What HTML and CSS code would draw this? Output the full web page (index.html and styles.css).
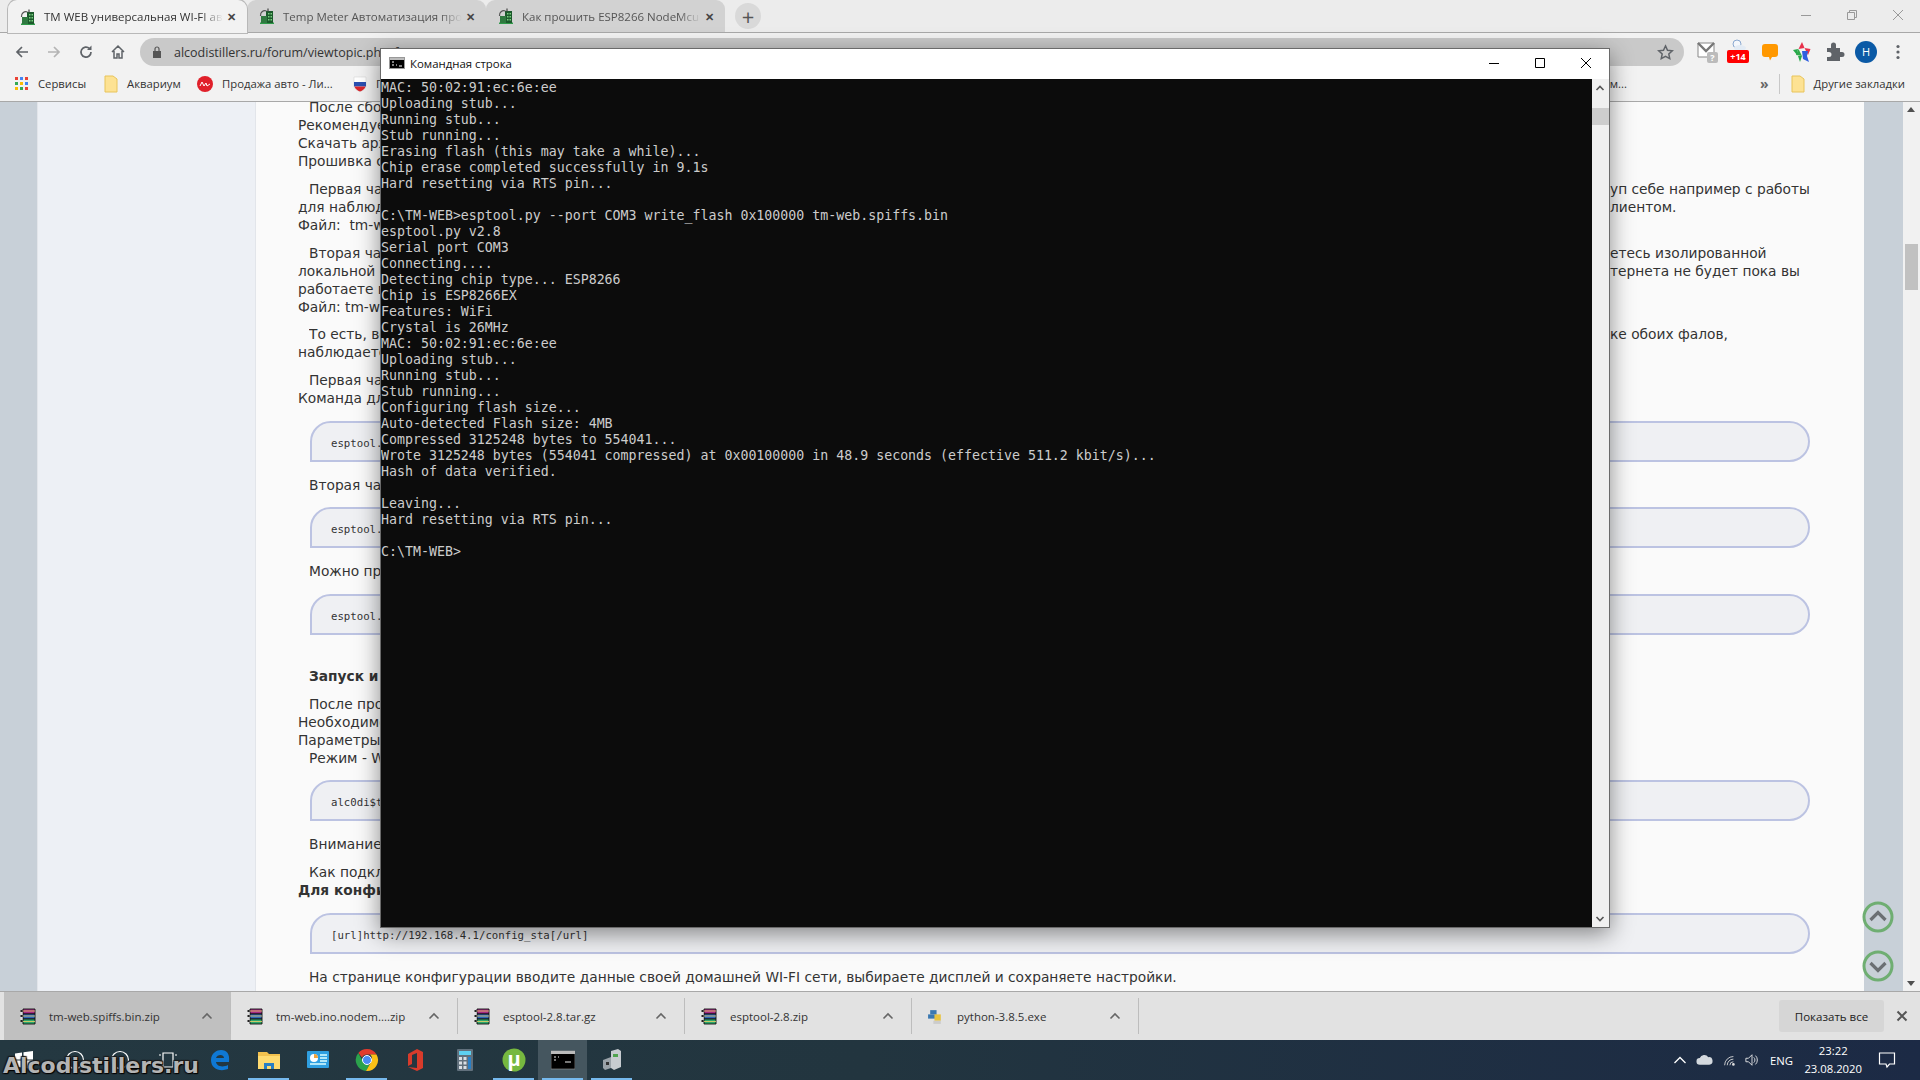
FILE: index.html
```html
<!DOCTYPE html>
<html lang="ru">
<head>
<meta charset="utf-8">
<title>Командная строка</title>
<link rel="stylesheet" href="styles.css">
</head>
<body>
<svg width="0" height="0" class="defs">
  <defs>
    <symbol id="fav" viewBox="0 0 16 16"><path d="M1 14.500h14V16H1z" fill="#2f9a4a"/><path d="M7 3h7v12H7z" fill="#1c5a2c"/><path d="M2 8h6v7H2z" fill="#2f7a40"/><path d="M9 5h1.500v1.500H9zM11.500 5H13v1.500h-1.500zM9 8h1.500v1.500H9zM11.500 8H13v1.500h-1.500zM9 11h1.500v1.500H9zM11.500 11H13v1.500h-1.500z" fill="#79d07f"/><path d="M1.500 8a4.500 4.500 0 0 1 6-5" fill="none" stroke="#555" stroke-width="1.300"/><path d="M9 0.500v3" stroke="#444" stroke-width="1.200"/></symbol>
    <symbol id="rar" viewBox="0 0 17 17"><path d="M4 1h12v5H4z" fill="#a32a86" stroke="#111" stroke-width=".9"/><path d="M4 6h12v5H4z" fill="#2f68b8" stroke="#111" stroke-width=".9"/><path d="M4 11h12v5H4z" fill="#2fa66c" stroke="#111" stroke-width=".9"/><path d="M4 3h12M4 8h12M4 13.500h12" stroke="#f0d36a" stroke-width=".8"/><path d="M1.500 2h2v2h-2zM1.500 7h2v2h-2zM1.500 12h2v2h-2z" fill="#222"/><path d="M1.500 4h2v3h-2zM1.500 9h2v3h-2z" fill="#ddd"/></symbol>
    <symbol id="chev" viewBox="0 0 12 8"><path d="M1.500 6.500L6 2l4.500 4.500" fill="none" stroke="#666" stroke-width="1.600"/></symbol>
    <symbol id="folder" viewBox="0 0 14 18"><path d="M1 1h8l4 3v13H1z" fill="#fde293" stroke="#e8c45a"/></symbol>
  </defs>
</svg>

<div class="screen">
  <header class="tabstrip">
    <div class="tab tab-active">
      <svg class="favicon"><use href="#fav"/></svg>
      <span class="tab-title">TM WEB универсальная WI-FI ав</span>
      <span class="tab-x">✕</span>
    </div>
    <div class="tab">
      <svg class="favicon"><use href="#fav"/></svg>
      <span class="tab-title">Temp Meter Автоматизация про</span>
      <span class="tab-x">✕</span>
    </div>
    <div class="tab">
      <svg class="favicon"><use href="#fav"/></svg>
      <span class="tab-title">Как прошить ESP8266 NodeMcu</span>
      <span class="tab-x">✕</span>
    </div>
    <div class="newtab">+</div>
    <div class="winctl">
      <svg width="12" height="12" viewBox="0 0 12 12"><path d="M1 6.500h10" stroke="#999"/></svg>
      <svg width="12" height="12" viewBox="0 0 12 12"><path d="M1.500 3.500h7v7h-7zM3.500 3.500v-2h7v7h-2" fill="none" stroke="#999"/></svg>
      <svg width="12" height="12" viewBox="0 0 12 12"><path d="M1 1l10 10M11 1L1 11" stroke="#999"/></svg>
    </div>
  </header>

  <div class="toolbar">
    <svg class="tb-ic" viewBox="0 0 16 16"><path d="M14 8H3M8 3L3 8l5 5" fill="none" stroke="#5f6368" stroke-width="1.700"/></svg>
    <svg class="tb-ic" viewBox="0 0 16 16"><path d="M2 8h11M8 3l5 5-5 5" fill="none" stroke="#b4b4b4" stroke-width="1.700"/></svg>
    <svg class="tb-ic" viewBox="0 0 16 16"><path d="M13 8a5 5 0 1 1-1.500-3.500" fill="none" stroke="#5f6368" stroke-width="1.700"/><path d="M13.500 1.500v4.500H9z" fill="#5f6368"/></svg>
    <svg class="tb-ic" viewBox="0 0 16 16"><path d="M2 8l6-6 6 6M4 7v7h3v-4h2v4h3V7" fill="none" stroke="#5f6368" stroke-width="1.500"/></svg>
    <div class="omnibox">
      <svg class="lock" viewBox="0 0 10 12"><path d="M1 5h8v7H1z" fill="#555"/><path d="M3 5V3a2 2 0 0 1 4 0v2" fill="none" stroke="#555" stroke-width="1.200"/></svg>
      <span class="url">alcodistillers.ru/forum/viewtopic.php?f=1&amp;t=1707</span>
      <svg class="star" viewBox="0 0 16 16"><path d="M8 1.800l1.900 4.100 4.500.5-3.300 3 .9 4.400L8 11.600l-4 2.200.9-4.400-3.300-3 4.500-.5z" fill="none" stroke="#5f6368" stroke-width="1.400"/></svg>
    </div>
    <div class="exts">
      <svg class="ext ext-mail" viewBox="0 0 22 22"><path d="M1 2h16v14H1z" fill="#fff" stroke="#888"/><path d="M1 2l8 8 8-8" fill="none" stroke="#777" stroke-width="2.400"/><rect x="10" y="11" width="11" height="11" rx="2" fill="#bbb"/><text x="15.500" y="20" class="ext-q">?</text></svg>
      <div class="ext weather"><svg width="20" height="12" viewBox="0 0 20 12"><circle cx="9" cy="5" r="4" fill="#f4f7fb" stroke="#8aa8d0"/><ellipse cx="12" cy="9" rx="6" ry="3" fill="#e3ebf4"/></svg><span class="badge">+14</span></div>
      <svg class="ext" viewBox="0 0 22 22"><path d="M6 3h10a3 3 0 0 1 3 3v7a3 3 0 0 1-3 3h-3l-2 3.500-1-3.500H6a3 3 0 0 1-3-3V6a3 3 0 0 1 3-3z" fill="#ff9800"/></svg>
      <svg class="ext" viewBox="0 0 22 22"><path d="M11 1l2.500 6-6 1z" fill="#e8304a"/><path d="M13.500 7l6 1-2.500 6z" fill="#e8304a"/><path d="M7.500 8L5 14l6 1z" fill="#2faa4a"/><path d="M2 9l5-1-1 6zM7 15l4 0-2 6z" fill="#26a84a"/><path d="M11 10l6 0-1 5 2 6-6-3z" fill="#2f5fe0"/></svg>
      <svg class="ext" viewBox="0 0 22 22"><path d="M4 7h4V4a2.500 2.500 0 0 1 5 0v3h4v4h2a2.500 2.500 0 0 1 0 5h-2v4H4v-4h2a2.500 2.500 0 0 0 0-5H4z" fill="#5f6368"/></svg>
      <div class="avatar">H</div>
      <svg class="menu" viewBox="0 0 4 16"><circle cx="2" cy="2.500" r="1.600" fill="#5f6368"/><circle cx="2" cy="8" r="1.600" fill="#5f6368"/><circle cx="2" cy="13.500" r="1.600" fill="#5f6368"/></svg>
    </div>
  </div>

  <nav class="bookmarks">
    <div class="bm bm-apps">
      <svg class="apps" viewBox="0 0 14 14">
        <rect x="0" y="0" width="3" height="3" fill="#ea4335"/><rect x="5" y="0" width="3" height="3" fill="#4285f4"/><rect x="10" y="0" width="3" height="3" fill="#ea4335"/>
        <rect x="0" y="5" width="3" height="3" fill="#34a853"/><rect x="5" y="5" width="3" height="3" fill="#fbbc05"/><rect x="10" y="5" width="3" height="3" fill="#4285f4"/>
        <rect x="0" y="10" width="3" height="3" fill="#fbbc05"/><rect x="5" y="10" width="3" height="3" fill="#34a853"/><rect x="10" y="10" width="3" height="3" fill="#ea4335"/>
      </svg>
      <span>Сервисы</span>
    </div>
    <div class="bm bm-aqua"><svg class="bm-folder"><use href="#folder"/></svg><span>Аквариум</span></div>
    <div class="bm bm-auto"><svg class="bm-ic" viewBox="0 0 16 16"><circle cx="8" cy="8" r="8" fill="#e0202a"/><path d="M3 10l2-4 2 4 2-3 1 3 3-2" fill="none" stroke="#fff" stroke-width="1"/></svg><span>Продажа авто - Ли...</span></div>
    <div class="bm bm-ru"><svg class="bm-ic" viewBox="0 0 16 16"><path d="M2 1h12v9c0 3-3 4.500-6 5.500C5 14.500 2 13 2 10z" fill="#fff" stroke="#ccc" stroke-width=".5"/><path d="M2 6h12v4.500H2z" fill="#2a4fb0"/><path d="M2.500 10.500h11C13 13 10.500 14.500 8 15.500 5.500 14.500 3 13 2.500 10.500z" fill="#d8262c"/></svg><span>Продажа</span></div>
    <div class="bm-right">
      <span class="bm-cut">м...</span>
      <span class="bm-more">»</span>
      <span class="bm-sep"></span>
      <svg class="bm-folder"><use href="#folder"/></svg>
      <span class="bm-other">Другие закладки</span>
    </div>
  </nav>

  <main class="viewport">
    <div class="page-gutter"></div>
    <div class="page-side"></div>
    <article class="post">
      <p class="para">
        <span class="ln ind">После сборки прошивки</span>
        <span class="ln">Рекомендуем использовать</span>
        <span class="ln">Скачать архив</span>
        <span class="ln">Прошивка состоит</span>
      </p>
      <p class="para">
        <span class="ln ind split"><span class="ln-l">Первая часть прошивки</span><span class="ln-r">уп себе например с работы</span></span>
        <span class="ln split"><span class="ln-l">для наблюдения</span><span class="ln-r">лиентом.</span></span>
        <span class="ln">Файл:&nbsp; tm-web.ino.nodemcu</span>
      </p>
      <p class="para para-short">
        <span class="ln ind split"><span class="ln-l">Вторая часть прошивки</span><span class="ln-r">етесь изолированной</span></span>
        <span class="ln split"><span class="ln-l">локальной сети</span><span class="ln-r">тернета не будет пока вы</span></span>
        <span class="ln">работаете в</span>
        <span class="ln">Файл: tm-web.spiffs</span>
      </p>
      <p class="para">
        <span class="ln ind split"><span class="ln-l">То есть, все</span><span class="ln-r">ке обоих фалов,</span></span>
        <span class="ln">наблюдаете</span>
      </p>
      <p class="para">
        <span class="ln ind">Первая часть</span>
        <span class="ln">Команда для</span>
      </p>
      <div class="code">esptool.py</div>
      <p class="para tight tight-a"><span class="ln ind">Вторая часть</span></p>
      <div class="code">esptool.py</div>
      <p class="para tight"><span class="ln ind">Можно прошить</span></p>
      <div class="code">esptool.py</div>
      <p class="para head"><span class="ln ind"><b>Запуск и настройка</b></span></p>
      <p class="para para-before-code">
        <span class="ln ind">После прошивки</span>
        <span class="ln">Необходимо</span>
        <span class="ln">Параметры</span>
        <span class="ln ind">Режим - WI-FI</span>
      </p>
      <div class="code">alc0di$tillers</div>
      <p class="para tight tight-b"><span class="ln ind">Внимание</span></p>
      <p class="para">
        <span class="ln ind">Как подключиться</span>
        <span class="ln"><b>Для конфигурации</b></span>
      </p>
      <div class="code">[url]http://192.168.4.1/config_sta[/url]</div>
      <p class="para tight"><span class="ln ind">На странице конфигурации вводите данные своей домашней WI-FI сети, выбираете дисплей и сохраняете настройки.</span></p>
    </article>
    <div class="page-right">
      <svg class="jump jump-up" viewBox="0 0 32 32"><circle cx="16" cy="16" r="14" fill="none" stroke="#6fae72" stroke-width="3"/><path d="M8.500 19L16 11.500 23.500 19" fill="none" stroke="#6b6f73" stroke-width="3.200"/></svg>
      <svg class="jump jump-down" viewBox="0 0 32 32"><circle cx="16" cy="16" r="14" fill="none" stroke="#6fae72" stroke-width="3"/><path d="M8.500 13L16 20.500 23.500 13" fill="none" stroke="#6b6f73" stroke-width="3.200"/></svg>
    </div>
    <div class="pg-scroll">
      <span class="sb-up"></span>
      <span class="sb-thumb"></span>
      <span class="sb-down"></span>
    </div>
  </main>

  <div class="downloads">
    <div class="dl dl-hover"><svg class="dl-ic"><use href="#rar"/></svg><span class="dl-name">tm-web.spiffs.bin.zip</span><svg class="dl-ch"><use href="#chev"/></svg></div>
    <div class="dl"><svg class="dl-ic"><use href="#rar"/></svg><span class="dl-name">tm-web.ino.nodem....zip</span><svg class="dl-ch"><use href="#chev"/></svg></div>
    <div class="dl"><svg class="dl-ic"><use href="#rar"/></svg><span class="dl-name">esptool-2.8.tar.gz</span><svg class="dl-ch"><use href="#chev"/></svg></div>
    <div class="dl"><svg class="dl-ic"><use href="#rar"/></svg><span class="dl-name">esptool-2.8.zip</span><svg class="dl-ch"><use href="#chev"/></svg></div>
    <div class="dl"><svg class="dl-ic" viewBox="0 0 16 16"><path d="M3 2h6v4H3z" fill="#3b78b0"/><path d="M1 6h8v4H1z" fill="#3b78b0"/><path d="M7 6h6v6H7z" fill="#e8c340"/><path d="M6 12h7v3H6z" fill="#ccc"/></svg><span class="dl-name">python-3.8.5.exe</span><svg class="dl-ch"><use href="#chev"/></svg></div>
    <div class="dl-end">
      <div class="showall">Показать все</div>
      <svg class="dl-close" viewBox="0 0 12 12"><path d="M1.500 1.500l9 9M10.500 1.500l-9 9" stroke="#555" stroke-width="2"/></svg>
    </div>
  </div>

  <footer class="taskbar">
    <div class="tb-left">
      <svg class="tk" viewBox="0 0 20 20"><path d="M1 3.500l7-1v7H1zM9.500 2.300L19 1v8.500H9.500zM1 10.500h7v7l-7-1zM9.500 10.500H19V19l-9.500-1.300z" fill="#fff"/></svg>
      <svg class="tk tk-search" viewBox="0 0 20 20"><circle cx="10" cy="10" r="8.500" fill="none" stroke="#fff" stroke-width="1.200"/></svg>
      <svg class="tk tk-cortana" viewBox="0 0 20 20"><circle cx="10" cy="10" r="8.500" fill="none" stroke="#fff" stroke-width="1.200"/></svg>
      <svg class="tk tk-view" viewBox="0 0 20 20"><path d="M5 3h10v14H5zM1 5h2M17 5h2M1 15h2M17 15h2" fill="none" stroke="#fff" stroke-width="1.200"/></svg>
    </div>
    <div class="tb-apps">
      <div class="app"><svg viewBox="0 0 24 24"><path d="M21 14H8c.5 4 6 6 12 3v4c-8 3-17 0-17-9C3 5 9 2 13 2c6 0 9 4 8 12zM8 10h8c0-4-7-4-8 0z" fill="#0f78d4"/></svg></div>
      <div class="app on"><svg viewBox="0 0 24 24"><path d="M1 4h9l2 2h11v4H1z" fill="#f2c14e"/><path d="M1 8h22v13H1z" fill="#ffdb70"/><path d="M7 15h10v6H7z" fill="#2a7fc4"/><path d="M10 18h4v3h-4z" fill="#ffdb70"/></svg></div>
      <div class="app"><svg viewBox="0 0 24 24"><rect x="1" y="3" width="22" height="17" rx="1" fill="#2f9fe0"/><circle cx="8" cy="10" r="4" fill="#fff"/><path d="M8 10V6a4 4 0 0 1 4 4z" fill="#f2a33a"/><path d="M14 7h7M14 10h7M14 13h7M4 16h16" stroke="#dff" stroke-width="1.500"/></svg></div>
      <div class="app on"><svg viewBox="0 0 24 24"><path d="M12 1a11 11 0 0 1 9.500 5.500H12A5.500 5.500 0 0 0 7 9.500L3.300 5A11 11 0 0 1 12 1z" fill="#e33b2e"/><path d="M3.300 5L8 13.500a5.500 5.500 0 0 0 6.500 3L11 23A11 11 0 0 1 3.300 5z" fill="#2ba24c"/><path d="M21.500 6.500A11 11 0 0 1 11 23l5-9a5.500 5.500 0 0 0-1-7.500z" fill="#fbc116"/><circle cx="12" cy="12" r="4.500" fill="#4a8af4" stroke="#fff"/></svg></div>
      <div class="app"><svg viewBox="0 0 24 24"><path d="M4 6l9-5 6 3v16l-6 3-9-4 9 1V5L8 7v9l-4 2z" fill="#d83b2b"/></svg></div>
      <div class="app"><svg viewBox="0 0 24 24"><rect x="4" y="1" width="16" height="22" rx="1" fill="#61707c"/><rect x="6" y="3" width="12" height="4" fill="#5dd0f0"/><path d="M6 9h3v3H6zM10.500 9h3v3h-3zM6 13.500h3v3H6zM10.500 13.500h3v3h-3zM6 18h3v3H6zM10.500 18h3v3h-3z" fill="#d9dfe4"/><path d="M15 9h3v12h-3z" fill="#2a7fc4"/></svg></div>
      <div class="app on"><svg viewBox="0 0 24 24"><circle cx="12" cy="12" r="11.500" fill="#76b83f"/><text x="12" y="18" class="mu">µ</text></svg></div>
      <div class="app on active"><svg viewBox="0 0 24 24"><rect x="0" y="3" width="24" height="18" fill="#000" stroke="#999" stroke-width=".6"/><rect x="0" y="3" width="24" height="3" fill="#bbb"/><path d="M3 9h2M7 9h1M3 12h2M14 14h6" stroke="#eee" stroke-width="1.200"/></svg></div>
      <div class="app on"><svg viewBox="0 0 24 24"><path d="M11 3l7-2 3 2v16l-7 3-3-2z" fill="#c7ccd0"/><path d="M3 12l8-3v11l-6 2-2-2z" fill="#9aa2a8"/><rect x="13" y="6" width="5" height="3" fill="#4fa34f"/><rect x="6" y="14" width="3" height="3" fill="#333"/></svg></div>
    </div>
    <div class="tray">
      <svg class="tr-ic" viewBox="0 0 14 14"><path d="M1.500 10L7 4.500 12.500 10" fill="none" stroke="#fff" stroke-width="1.300"/></svg>
      <svg class="tr-cloud" viewBox="0 0 18 12"><path d="M4 11a3.500 3.500 0 0 1 0-7 5 5 0 0 1 9-1 4 4 0 0 1 1 8z" fill="#d4d9de"/></svg>
      <svg class="tr-ic" viewBox="0 0 16 16"><circle cx="13" cy="13" r="1.500" fill="#ddd"/><path d="M3 14a10 10 0 0 1 10-10M6 14a7 7 0 0 1 7-7M9 14a4 4 0 0 1 4-4" fill="none" stroke="#ddd"/></svg>
      <svg class="tr-ic" viewBox="0 0 16 16"><path d="M1 6h3l4-4v12l-4-4H1z" fill="none" stroke="#eee"/><path d="M10 5a4 4 0 0 1 0 6M12 3a7 7 0 0 1 0 10" fill="none" stroke="#eee"/></svg>
      <span class="tr-lang">ENG</span>
      <div class="clock"><span>23:22</span><span>23.08.2020</span></div>
      <svg class="tr-note" viewBox="0 0 18 18"><path d="M1.500 2h15v11h-5l-2.500 3-1-3h-6.500z" fill="none" stroke="#fff" stroke-width="1.200"/></svg>
    </div>
  </footer>

  <div class="watermark">Alcodistillers.ru</div>

  <section class="cmd">
    <div class="cmd-title">
      <svg class="cmd-ic" viewBox="0 0 16 12"><rect width="16" height="12" fill="#000"/><rect x=".5" y=".5" width="15" height="11" fill="none" stroke="#999"/><rect x="1" y="1" width="14" height="2" fill="#bbb"/><path d="M3 5h2M3 8h2M7 8h1M10 9h3" stroke="#fff"/></svg>
      <span class="cmd-name">Командная строка</span>
      <div class="cmd-ctl">
        <svg viewBox="0 0 12 12"><path d="M1 6.500h10" stroke="#000"/></svg>
        <svg viewBox="0 0 12 12"><path d="M1.500 1.500h9v9h-9z" fill="none" stroke="#000"/></svg>
        <svg viewBox="0 0 12 12"><path d="M1 1l10 10M11 1L1 11" stroke="#000"/></svg>
      </div>
    </div>
    <div class="cmd-body">
<pre class="cmd-text">MAC: 50:02:91:ec:6e:ee
Uploading stub...
Running stub...
Stub running...
Erasing flash (this may take a while)...
Chip erase completed successfully in 9.1s
Hard resetting via RTS pin...

C:\TM-WEB&gt;esptool.py --port COM3 write_flash 0x100000 tm-web.spiffs.bin
esptool.py v2.8
Serial port COM3
Connecting....
Detecting chip type... ESP8266
Chip is ESP8266EX
Features: WiFi
Crystal is 26MHz
MAC: 50:02:91:ec:6e:ee
Uploading stub...
Running stub...
Stub running...
Configuring flash size...
Auto-detected Flash size: 4MB
Compressed 3125248 bytes to 554041...
Wrote 3125248 bytes (554041 compressed) at 0x00100000 in 48.9 seconds (effective 511.2 kbit/s)...
Hash of data verified.

Leaving...
Hard resetting via RTS pin...

C:\TM-WEB&gt;</pre>
      <div class="cmd-scroll">
        <svg class="cs-arrow" viewBox="0 0 10 8"><path d="M1.500 6L5 2.500 8.500 6" fill="none" stroke="#555" stroke-width="1.600"/></svg>
        <span class="cs-thumb"></span>
        <svg class="cs-arrow cs-down" viewBox="0 0 10 8"><path d="M1.500 2L5 5.500 8.500 2" fill="none" stroke="#555" stroke-width="1.600"/></svg>
      </div>
    </div>
  </section>
</div>
</body>
</html>
```
FILE: styles.css
```css
* { box-sizing: border-box; }
html, body { margin: 0; padding: 0; height: 100%; overflow: hidden; }
body { font-family: "Open Sans", "Noto Sans", sans-serif; color: #222; }
.defs { position: absolute; }
.screen { position: relative; width: 1920px; height: 1080px; display: flex; flex-direction: column; background: #f2f2f2; overflow: hidden; }

/* tab strip */
.tabstrip { height: 33px; background: #ececec; display: flex; align-items: flex-end; padding-left: 8px; border-bottom: 1px solid #a8a8a8; position: relative; }
.tab { width: 239px; height: 32px; display: flex; align-items: center; padding: 0 8px 0 12px; background: #d2d2d2; font-size: 12px; color: #555; border-radius: 9px 9px 0 0; }
.tab-active { background: #f2f2f2; color: #333; height: 33px; margin-bottom: -1px; position: relative; z-index: 1; box-shadow: 0 0 0 1px #b8b8b8; }
.favicon { width: 16px; height: 16px; flex: none; }
.tab-title { flex: 1; margin-left: 8px; white-space: nowrap; overflow: hidden; font-size: 11.5px; -webkit-mask-image: linear-gradient(to left, transparent 0, #000 22px); mask-image: linear-gradient(to left, transparent 0, #000 22px); }
.tab-x { width: 16px; font-size: 11px; font-weight: 700; color: #444; text-align: center; flex: none; }
.newtab { width: 26px; height: 26px; border-radius: 50%; background: #d9d9d9; margin: 0 0 3px 10px; display: flex; align-items: center; justify-content: center; font-size: 22px; line-height: 1; color: #555; }
.winctl { margin-left: auto; display: flex; gap: 34px; align-self: flex-start; padding: 9px 16px 0 0; }
.winctl svg { display: block; }

/* toolbar */
.toolbar { height: 35px; display: flex; align-items: center; padding: 3px 0 0 14px; background: #f2f2f2; }
.tb-ic { width: 16px; height: 16px; margin-right: 16px; flex: none; }
.omnibox { width: 1544px; margin-left: -2px; height: 28px; border-radius: 14px; background: #c9c9c9; display: flex; align-items: center; padding: 0 10px 0 12px; }
.lock { width: 10px; height: 12px; flex: none; }
.url { margin-left: 12px; font-size: 12.5px; color: #333; white-space: nowrap; }
.star { width: 17px; height: 17px; margin-left: auto; }
.exts { display: flex; align-items: center; margin-left: 11px; gap: 10px; }
.ext { width: 22px; height: 22px; flex: none; display: block; position: relative; }
.ext-mail { transform: translateX(2px); }
.ext-q { font: 700 9px "Open Sans", sans-serif; fill: #fff; text-anchor: middle; }
.weather { display: flex; flex-direction: column; align-items: center; height: 26px; }
.badge { background: #f00; color: #fff; font-size: 9px; font-weight: 700; width: 22px; height: 13px; line-height: 13px; text-align: center; border-radius: 2px; margin-top: -1px; }
.avatar { width: 22px; height: 22px; border-radius: 50%; background: #0b5aa6; color: #fff; font-size: 11px; text-align: center; line-height: 22px; flex: none; }
.menu { width: 4px; height: 16px; margin-left: 9px; }

/* bookmarks */
.bookmarks { height: 34px; display: flex; align-items: center; background: #f2f2f2; border-bottom: 1px solid #a8a8a8; padding-bottom: 2px; font-size: 11.3px; color: #333; }
.bm { display: flex; align-items: center; gap: 6px; white-space: nowrap; }
.bm-apps { width: 100px; padding-left: 15px; gap: 9px; }
.apps { width: 14px; height: 14px; }
.bm-aqua { width: 97px; padding-left: 4px; gap: 9px; }
.bm-folder { width: 14px; height: 18px; flex: none; }
.bm-ic { width: 16px; height: 16px; flex: none; }
.bm-auto { width: 155px; gap: 9px; }
.bm-ru { width: 120px; gap: 8px; }
.bm-right { margin-left: auto; display: flex; align-items: center; padding-right: 15px; gap: 6px; }
.bm-cut { margin-right: 127px; }
.bm-more { font-size: 14px; font-weight: 700; color: #666; margin-right: 4px; }
.bm-sep { width: 1px; height: 20px; background: #c8c8c8; margin-right: 5px; }
.bm-other { margin-left: 3px; }

/* page */
.viewport { height: 889px; display: flex; overflow: hidden; background: #c8d0d8; position: relative; }
.page-gutter { width: 37px; background: #c8d0d8; flex: none; }
.page-side { width: 219px; background: #edf0f5; flex: none; border-left: 1px solid #e2e5ea; border-right: 1px solid #e2e5ea; }
.post { width: 1608px; flex: none; background: #fafafa; padding: 0 54px 0 42px; font-family: "DejaVu Sans", Verdana, sans-serif; font-size: 13.78px; line-height: 18px; color: #333; overflow: hidden; }
.para { margin: 0 0 10px; }
.para:first-child { margin-top: -4px; }
.para-short { margin-bottom: 9px; }
.para.tight { margin: 14px 0 14px; }
.para.tight-b { margin-bottom: 10px; }
.para.head { margin: 32px 0 10px; }
.ln { display: block; white-space: nowrap; }
.ln.ind { padding-left: 11px; }
.split { display: grid; grid-template-columns: 1312px auto; }
.ln.ind.split { grid-template-columns: 1301px auto; }
.ln-l { overflow: hidden; }
.code { margin-left: 12px; height: 41px; border: 2px solid #bcc3e2; border-radius: 24px 24px 24px 0; background: #eff0f3; padding-left: 19px; font-family: "DejaVu Sans Mono", monospace; font-size: 10.7px; line-height: 41px; color: #333; white-space: nowrap; overflow: hidden; }
.para + .code { margin-top: 14px; }
.para.para-before-code + .code { margin-top: 13px; }
.para.tight.tight-a { margin-bottom: 13px; }
.para.tight-a + .code { margin-top: 13px; }
.page-right { width: 39px; flex: none; background: #c8d0d8; position: relative; }
.jump { position: absolute; left: -2px; width: 32px; height: 32px; }
.jump-up { top: 799px; }
.jump-down { top: 848px; }
.pg-scroll { width: 17px; flex: none; background: #f1f1f1; position: relative; }
.sb-up, .sb-down { position: absolute; left: 4px; width: 0; height: 0; border-left: 4px solid transparent; border-right: 4px solid transparent; }
.sb-up { top: 5px; border-bottom: 5px solid #505050; }
.sb-down { bottom: 5px; border-top: 5px solid #505050; }
.sb-thumb { position: absolute; left: 2px; top: 142px; width: 13px; height: 46px; background: #c1c1c1; }

/* downloads */
.downloads { height: 49px; background: #e2e2e2; display: flex; align-items: stretch; padding-left: 4px; border-top: 1px solid #a8a8a8; font-size: 11.5px; color: #333; }
.dl { width: 227px; display: flex; align-items: center; padding: 0 18px 0 15px; position: relative; }
.dl::after { content: ""; position: absolute; right: 0; top: 6px; bottom: 6px; width: 1px; background: #bdbdbd; }
.dl-hover { background: #c0c0c0; }
.dl-ic { width: 17px; height: 17px; flex: none; }
.dl-name { margin-left: 13px; white-space: nowrap; flex: 1; }
.dl-ch { width: 12px; height: 8px; flex: none; }
.dl-end { margin-left: auto; display: flex; align-items: center; padding-right: 12px; }
.showall { width: 105px; height: 32px; background: #d6d6d6; border-radius: 3px; display: flex; align-items: center; justify-content: center; font-size: 11.5px; color: #222; }
.dl-close { width: 12px; height: 12px; margin-left: 12px; }

/* taskbar */
.taskbar { height: 40px; display: flex; align-items: stretch; background: linear-gradient(to right, #243841 0%, #22353f 45%, #1c2a45 100%); color: #fff; }
.tb-left { width: 195px; display: flex; align-items: center; padding-left: 14px; }
.tk { width: 20px; height: 20px; flex: none; }
.tk-search { margin-left: 31px; }
.tk-cortana { margin-left: 25px; }
.tk-view { margin-left: 28px; }
.tb-apps { display: flex; }
.app { width: 49px; display: flex; align-items: center; justify-content: center; position: relative; }
.app svg { width: 24px; height: 24px; }
.app.on::after { content: ""; position: absolute; left: 4px; right: 4px; bottom: 0; height: 2px; background: #76b9ed; }
.app.active { background: #45565f; }
.mu { font: 700 20px "Open Sans", sans-serif; fill: #fff; text-anchor: middle; }
.tray { margin-left: auto; display: flex; align-items: center; padding-right: 24px; font-size: 11.3px; color: #fff; }
.tr-ic { width: 14px; height: 14px; margin-right: 9px; }
.tr-cloud { width: 17px; height: 12px; margin-right: 9px; }
.tr-lang { margin: 0 11.5px 0 1.5px; }
.clock { display: flex; flex-direction: column; align-items: center; line-height: 18px; margin-right: 16px; }
.tr-note { width: 18px; height: 18px; }
.watermark { position: absolute; left: 3px; top: 1052px; font-family: "DejaVu Sans", sans-serif; font-weight: 700; font-size: 22px; line-height: 28px; color: #b4b4b4; text-shadow: 1px 1px 1px #000, -1px -1px 1px #1a1a1a, 1px -1px 1px #1a1a1a, -1px 1px 1px #1a1a1a; }

/* console window */
.cmd { position: absolute; left: 380px; top: 48px; width: 1230px; height: 880px; display: flex; flex-direction: column; background: #fff; border: 1px solid #6a6a6a; box-shadow: 0 6px 22px rgba(0, 0, 0, .45); }
.cmd-title { height: 30px; flex: none; display: flex; align-items: center; background: #fff; padding: 0 0 2px 8px; }
.cmd-ic { width: 16px; height: 12px; flex: none; }
.cmd-name { margin-left: 5px; font-size: 11.4px; color: #111; }
.cmd-ctl { margin-left: auto; display: flex; gap: 34px; padding-right: 17px; }
.cmd-ctl svg { width: 12px; height: 12px; display: block; }
.cmd-body { flex: 1; display: flex; min-height: 0; background: #0c0c0c; }
.cmd-text { flex: 1; margin: 0; padding: 1px 0 0 0; font-family: "DejaVu Sans Mono", monospace; font-size: 13.28px; line-height: 16px; color: #cccccc; white-space: pre; overflow: hidden; }
.cmd-scroll { width: 17px; flex: none; background: #f0f0f0; position: relative; }
.cs-arrow { position: absolute; left: 3px; top: 5px; width: 10px; height: 8px; }
.cs-down { top: auto; bottom: 4px; }
.cs-thumb { position: absolute; left: 0; top: 29px; width: 17px; height: 17px; background: #cdcdcd; }
```
